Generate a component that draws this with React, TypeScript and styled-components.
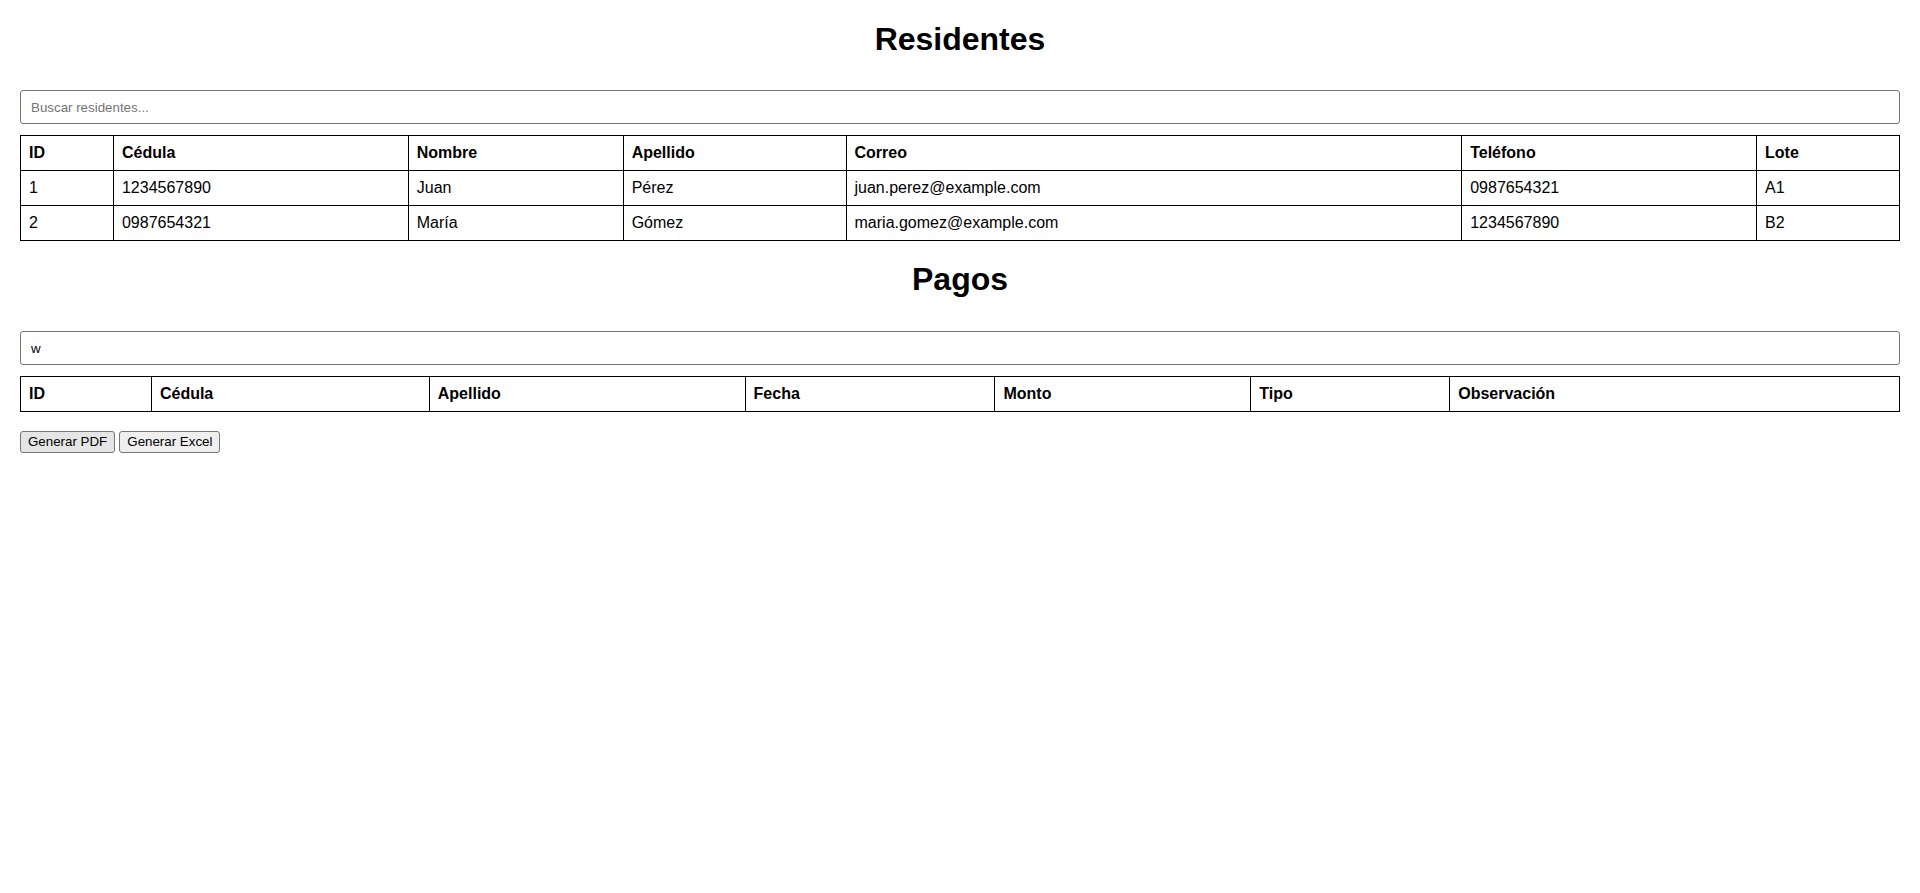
import React from "react";
import styled, { createGlobalStyle } from "styled-components";

const GlobalStyle = createGlobalStyle`
  html, body {
    margin: 0;
    padding: 0;
    background: #ffffff;
    color: #000000;
    font-family: "Liberation Sans", Arial, sans-serif;
  }
  * { box-sizing: border-box; }
`;

const Page = styled.div`
  padding: 21px 20px 20px;
  font-family: "Liberation Sans", Arial, sans-serif;
  font-size: 16px;
`;

const Title = styled.h1<{ $top?: number; $bottom?: number }>`
  margin: ${(p) => p.$top ?? 0}px 0 ${(p) => p.$bottom ?? 32}px;
  font-size: 32px;
  line-height: 37px;
  font-weight: bold;
  text-align: center;
`;

const SearchInput = styled.input`
  display: block;
  width: 100%;
  height: 34px;
  margin: 0 0 11px;
  padding: 8px 10px;
  font-family: "Liberation Sans", Arial, sans-serif;
  font-size: 13.33px;
  color: #000;
  border: 1px solid #767676;
  border-radius: 3px;
  background: #fff;
  outline: none;
  &::placeholder {
    color: #757575;
  }
`;

const Table = styled.table`
  width: 100%;
  border-collapse: collapse;
  font-size: 16px;
`;

const Th = styled.th`
  border: 1px solid #000;
  padding: 8px;
  text-align: left;
  font-weight: bold;
  line-height: 18px;
`;

const Td = styled.td`
  border: 1px solid #000;
  padding: 8px;
  text-align: left;
  line-height: 18px;
`;

const Actions = styled.div`
  display: flex;
  gap: 4px;
  margin-top: 19px;
`;

const Button = styled.button<{ $pressed?: boolean }>`
  font-family: "Liberation Sans", Arial, sans-serif;
  font-size: 13.33px;
  line-height: 16px;
  padding: 2px 7px;
  height: 22px;
  color: #000;
  background: ${(p) => (p.$pressed ? "#e5e5e5" : "#efefef")};
  border: 1px solid #767676;
  border-radius: 3px;
  cursor: default;
`;

const residentCols = ["ID", "Cédula", "Nombre", "Apellido", "Correo", "Teléfono", "Lote"];
const residents = [
  ["1", "1234567890", "Juan", "Pérez", "juan.perez@example.com", "0987654321", "A1"],
  ["2", "0987654321", "María", "Gómez", "maria.gomez@example.com", "1234567890", "B2"],
];
const residentWidths = [93, 295, 215, 223, 616, 295, 143];

const paymentCols = ["ID", "Cédula", "Apellido", "Fecha", "Monto", "Tipo", "Observación"];
const paymentWidths = [131, 278, 316, 250, 256, 199, 450];

export default function App() {
  return (
    <>
      <GlobalStyle />
      <Page>
        <Title>Residentes</Title>
        <SearchInput placeholder="Buscar residentes..." />
        <Table>
          <colgroup>
            {residentWidths.map((w, i) => (
              <col key={i} style={{ width: w }} />
            ))}
          </colgroup>
          <thead>
            <tr>
              {residentCols.map((c) => (
                <Th key={c}>{c}</Th>
              ))}
            </tr>
          </thead>
          <tbody>
            {residents.map((r) => (
              <tr key={r[0]}>
                {r.map((v, i) => (
                  <Td key={i}>{v}</Td>
                ))}
              </tr>
            ))}
          </tbody>
        </Table>

        <Title $top={20} $bottom={33}>Pagos</Title>
        <SearchInput defaultValue="w" />
        <Table>
          <colgroup>
            {paymentWidths.map((w, i) => (
              <col key={i} style={{ width: w }} />
            ))}
          </colgroup>
          <thead>
            <tr>
              {paymentCols.map((c) => (
                <Th key={c}>{c}</Th>
              ))}
            </tr>
          </thead>
          <tbody />
        </Table>

        <Actions>
          <Button $pressed>Generar PDF</Button>
          <Button>Generar Excel</Button>
        </Actions>
      </Page>
    </>
  );
}
